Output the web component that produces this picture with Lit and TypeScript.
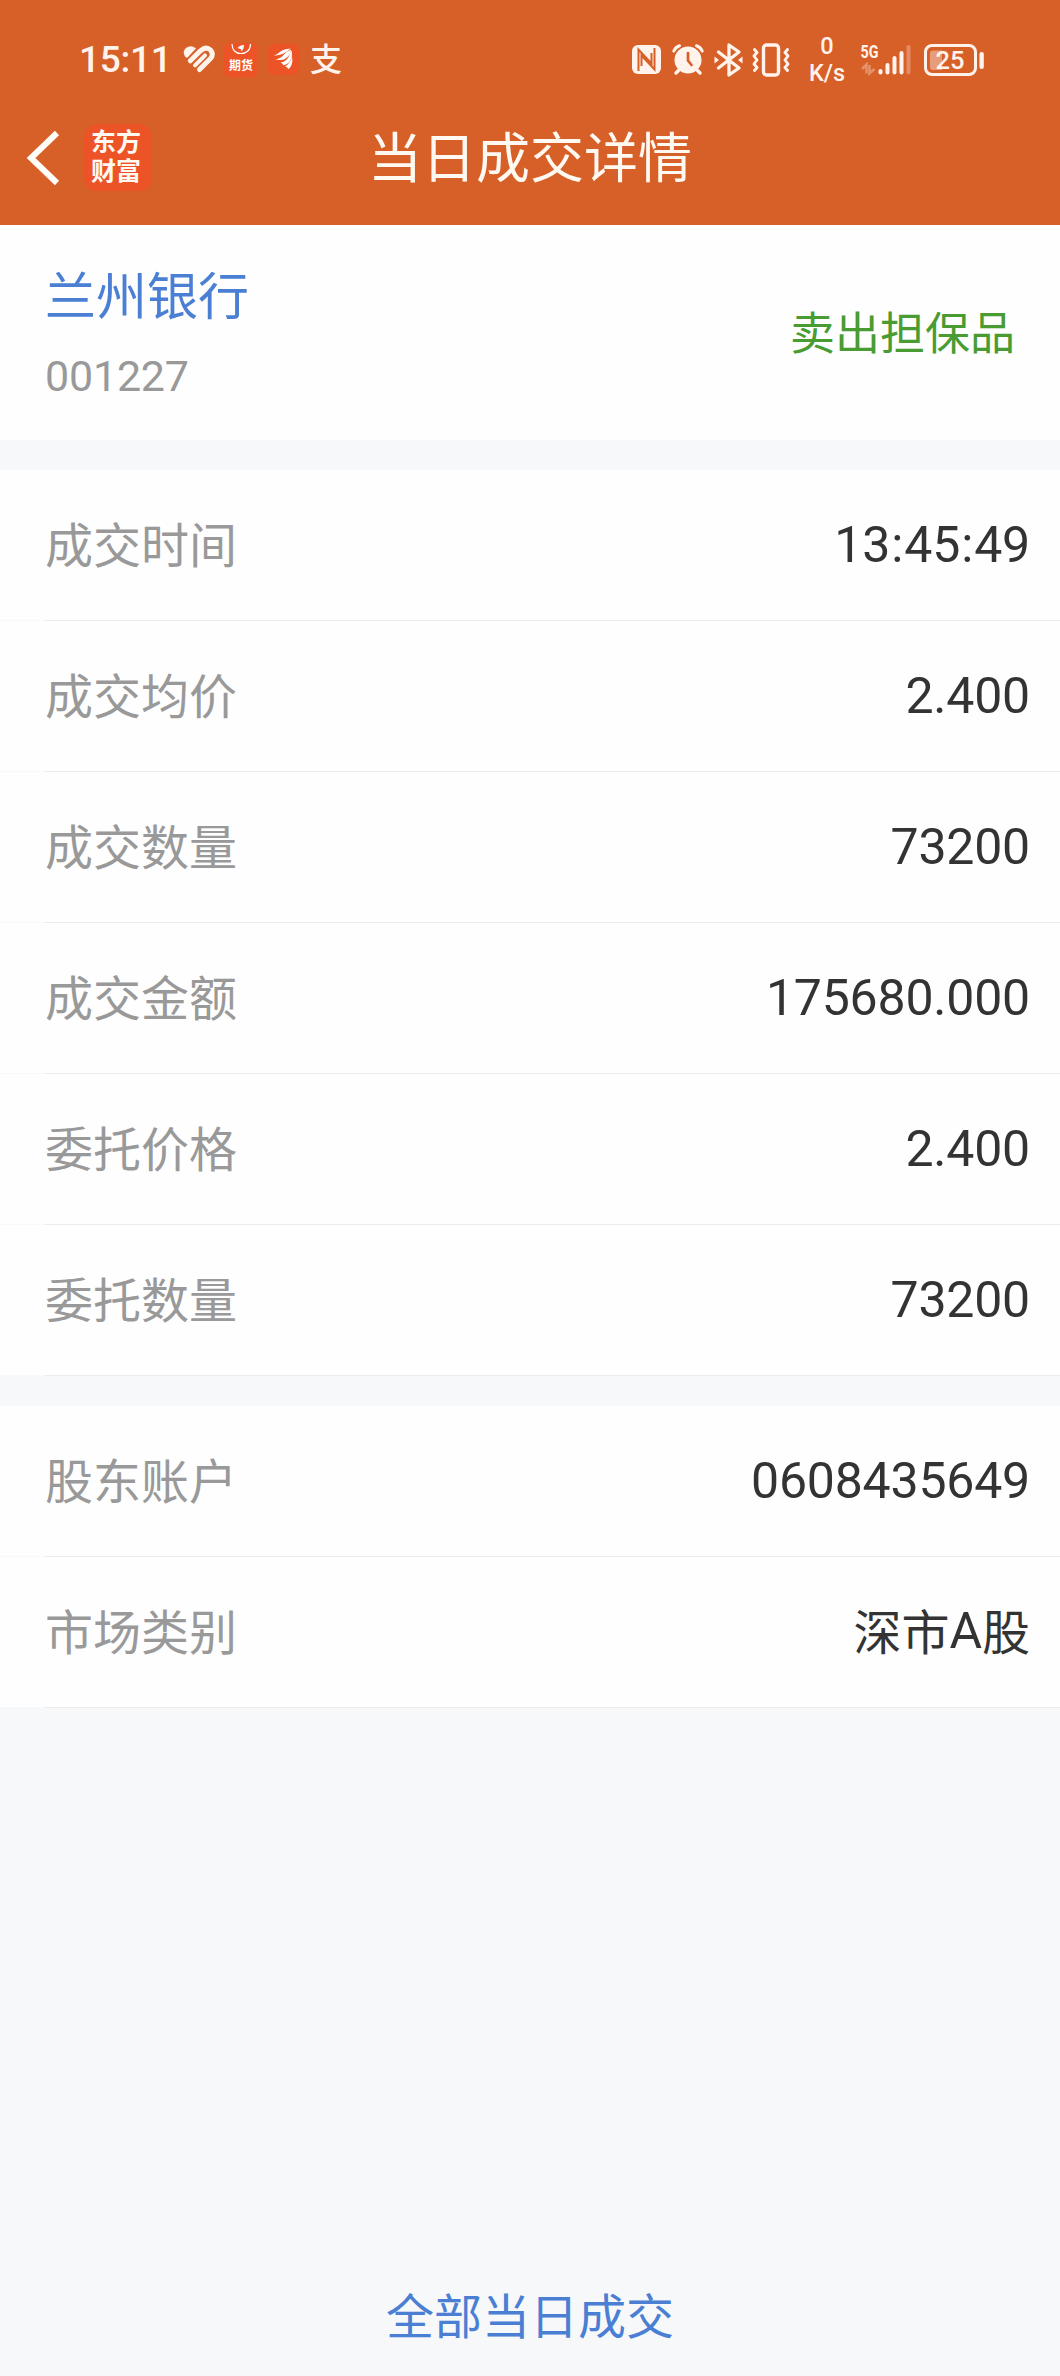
import { LitElement, html, css, svg } from "lit";
import { customElement, property } from "lit/decorators.js";

@customElement("status-bar")
class StatusBar extends LitElement {
  static styles = css`
    :host {
      display: flex;
      align-items: center;
      justify-content: space-between;
      height: 119px;
      padding: 0 76px 0 79px;
      box-sizing: border-box;
      color: #fff3ec;
      font-family: Roboto, "Noto Sans CJK SC", sans-serif;
    }
    .side {
      display: flex;
      align-items: center;
      height: 34px;
    }
    svg {
      display: block;
      flex: none;
      overflow: visible;
    }
    .time {
      width: 104px;
      font-size: 37px;
      line-height: 44px;
      font-weight: 500;
      letter-spacing: -0.3px;
      white-space: nowrap;
    }
    .futures {
      margin-left: 9px;
    }
    .eagle {
      margin-left: 10px;
    }
    .pay {
      width: 34px;
      margin-left: 11px;
      font-size: 32px;
      line-height: 48px;
      font-weight: 500;
    }
    .alarm {
      margin-left: 11px;
    }
    .bluetooth {
      margin-left: 10px;
    }
    .vibrate {
      margin-left: 9px;
    }
    .speed {
      display: flex;
      flex-direction: column;
      align-items: center;
      width: 38px;
      margin-left: 18px;
      font-size: 23.5px;
      line-height: 27px;
      font-weight: 500;
    }
    .signal {
      margin-left: 15px;
    }
    .battery {
      margin-left: 12px;
    }
    text {
      font-family: Roboto, "Noto Sans CJK SC", sans-serif;
    }
  `;

  render() {
    const bars = [
      [17.5, 26, 1],
      [24.5, 20, 1],
      [31.5, 13, 1],
      [38.5, 8, 1],
      [45.5, 2, 0.3],
    ];
    return html`
      <div class="side">
        <div class="time">15:11</div>
        <svg width="32" height="30" viewBox="0 0 32 30" fill="none" stroke="#fff3ec" stroke-linecap="round" stroke-linejoin="round">
          <path d="M2 11.500Q-1 6.500 3 3Q7.500 -.500 12.500 3L13 3.500L4.500 12.500Q3 13 2 11.500Z" fill="#fff3ec" stroke="none" />
          <path d="M7.300 15.800L17.500 5.800Q23 1 27.500 5Q31.500 9.500 27 14L16.500 24.500" stroke-width="5" />
          <path d="M12 20.300L22 10.300" stroke-width="4" />
        </svg>
        <svg class="futures" width="34" height="34" viewBox="0 0 34 34">
          <rect width="34" height="34" rx="6" fill="#ec5427" />
          <path d="M8 1C8 7 11.500 10.500 17 10.500S26.500 7 26.500 1" fill="none" stroke="#fff" stroke-width="1.200" />
          <path d="M13.500 5Q16 2 20 2Q20 6 17.500 8.500Q17.500 6.500 16.500 6Z" fill="#fff" />
          <text x="17" y="26.500" text-anchor="middle" font-size="12" font-weight="700" fill="#fff">期货</text>
        </svg>
        <svg class="eagle" width="31" height="31" viewBox="0 0 31 31">
          <rect width="31" height="31" rx="6" fill="#ec5427" />
          <path d="M6 11.500Q10 10 12.500 7.500Q15.500 5 22.500 4.500Q20 7.500 15.500 9.500Q10 12 6 11.500Z" fill="#fff" />
          <path d="M7.500 15.300Q13 14.500 16 10.500Q18.500 7.500 23 5.500Q22.500 10.500 19 13.500Q14.500 17.500 7.500 15.300Z" fill="#fff" />
          <path d="M12.500 18.800Q19.500 17 21.500 11Q22 8 23.500 6.500Q25 12 22 17Q19 21 15.500 21.200Q15 19.500 12.500 18.800Z" fill="#fff" />
          <path d="M17 22.500Q22.500 19.500 24 12Q25 17 23.500 21Q22.200 24 20.300 25Q19.500 22.800 17 22.500Z" fill="#fff" />
        </svg>
        <div class="pay">支</div>
      </div>
      <div class="side">
        <svg width="29" height="29" viewBox="0 0 29 29">
          <rect width="29" height="29" rx="6" fill="#fff3ec" />
          <path d="M6.500 26V4.500L19.500 18.500V8M22.500 3V24.500L9.500 10.500V21" fill="none" stroke="#d75f28" stroke-width="2" />
        </svg>
        <svg class="alarm" width="32" height="31" viewBox="0 0 32 31" fill="none" stroke="#fff3ec" stroke-linecap="round">
          <circle cx="16" cy="16" r="13.500" fill="#fff3ec" stroke="none" />
          <path d="M1.800 7Q3.500 3 7.500 1.700M30.200 7Q28.500 3 24.500 1.700" stroke-width="3" />
          <path d="M7 26L4 29M25 26L28 29" stroke-width="3.500" />
          <path d="M16 9V16.500L19.500 21" stroke="#d75f28" stroke-width="2.700" />
        </svg>
        <svg class="bluetooth" width="29" height="34" viewBox="0 0 29 34" fill="none" stroke="#fff3ec" stroke-width="3.300" stroke-linejoin="round" stroke-linecap="round">
          <path d="M4.500 9L25 25L15 32V2L25 9L4.500 25" />
          <path d="M.500 13.500L5 17L.500 20.500ZM28.500 13.500L24 17L28.500 20.500Z" fill="#fff3ec" stroke="none" />
        </svg>
        <svg class="vibrate" width="38" height="34" viewBox="0 0 38 34" fill="none" stroke="#fff3ec" stroke-width="3.400" stroke-linejoin="round" stroke-linecap="round">
          <rect x="11.500" y="2" width="15" height="30" rx="3" />
          <path d="M2.500 6.500L5 9.500L2 13L5 17L2 21L5 24.500L2.500 27.500M35.500 6.500L33 9.500L36 13L33 17L36 21L33 24.500L35.500 27.500" stroke-width="2.900" />
        </svg>
        <div class="speed"><span>0</span><span>K/s</span></div>
        <svg class="signal" width="51" height="34" viewBox="0 0 51 34">
          <text x="-.500" y="14.500" font-size="18.500" font-weight="700" fill="#fff3ec" textLength="18" lengthAdjust="spacingAndGlyphs">5G</text>
          <path d="M1 26L5.500 21.500V30.500M8.500 22V30.500L13.500 26" fill="none" stroke="#fff3ec" stroke-opacity=".35" stroke-width="2.500" />
          ${bars.map(
            ([x, y, o]) => svg`<rect x=${x} y=${y} width="4" height=${31.5 - y} rx="2" fill="#fff3ec" fill-opacity=${o} />`
          )}
        </svg>
        <svg class="battery" width="60" height="34" viewBox="0 0 60 34">
          <rect x="1.500" y="2.500" width="50" height="29" rx="6.500" fill="none" stroke="#fff3ec" stroke-width="3" />
          <path d="M9 7.500H18V27H9Q6 27 6 24V10.500Q6 7.500 9 7.500Z" fill="#fff3ec" fill-opacity=".42" />
          <text x="26" y="26" text-anchor="middle" font-size="26.500" font-weight="500" textLength="29" lengthAdjust="spacingAndGlyphs" fill="#fff3ec">25</text>
          <rect x="55.500" y="9" width="4.300" height="17" rx="2" fill="#fff3ec" />
        </svg>
      </div>
    `;
  }
}

@customElement("nav-header")
class NavHeader extends LitElement {
  static styles = css`
    :host {
      display: grid;
      grid-template-columns: 365px 1fr 365px;
      align-items: center;
      height: 106px;
      padding-bottom: 29px;
      box-sizing: border-box;
      color: #fff9f2;
      font-family: Roboto, "Noto Sans CJK SC", sans-serif;
    }
    .left {
      display: flex;
      align-items: center;
      gap: 23px;
      padding-left: 26px;
    }
    .badge {
      display: flex;
      flex-direction: column;
      justify-content: center;
      align-items: center;
      width: 68px;
      height: 67px;
      border-radius: 13px;
      background: #ec5427;
      font-size: 25px;
      line-height: 29px;
      font-weight: 700;
      padding-right: 4px;
      padding-bottom: 1px;
      box-sizing: border-box;
    }
    .title {
      padding-top: 5px;
      font-size: 54px;
      line-height: 72px;
      text-align: center;
      white-space: nowrap;
    }
  `;

  render() {
    return html`
      <div class="left">
        <svg width="35" height="56" viewBox="0 0 35 56" fill="none" stroke="#fffdf8" stroke-width="6">
          <path d="M31 3L5 28L31 53" />
        </svg>
        <div class="badge"><span>东方</span><span>财富</span></div>
      </div>
      <div class="title">当日成交详情</div>
    `;
  }
}

@customElement("detail-row")
class DetailRow extends LitElement {
  static styles = css`
    :host {
      display: flex;
      flex-direction: column;
      height: 151px;
      background: #fefefe;
      font-family: Roboto, "Noto Sans CJK SC", sans-serif;
    }
    .line {
      flex: 1;
      display: flex;
      align-items: center;
      justify-content: space-between;
      padding: 0 30px 0 45px;
      font-size: 48px;
      line-height: 70px;
    }
    .label {
      padding-top: 4px;
      color: #999;
    }
    .value {
      padding-top: 1px;
      color: #333;
    }
    .latin {
      font-size: 50px;
      letter-spacing: -0.2px;
    }
    .han {
      vertical-align: -2px;
    }
    .colon {
      padding: 0 1.1px;
    }
    .rule {
      height: 1px;
      background: linear-gradient(90deg, #f8f9fa 45px, #ebebeb 45px);
    }
  `;

  @property() label = "";
  @property() value = "";

  render() {
    const runs = this.value.match(/:|[\x21-\x39\x3b-\x7e]+|[^\x21-\x7e]+/g) ?? [];
    return html`
      <div class="line">
        <span class="label">${this.label}</span>
        <span class="value"
          >${runs.map((run) =>
            run === ":"
              ? html`<span class="latin colon">:</span>`
              : /^[\x21-\x7e]/.test(run)
                ? html`<span class="latin">${run}</span>`
                : html`<span class="han">${run}</span>`
          )}</span
        >
      </div>
      <div class="rule"></div>
    `;
  }
}

@customElement("app-root")
class AppRoot extends LitElement {
  static styles = css`
    :host {
      display: flex;
      flex-direction: column;
      width: 1060px;
      height: 2376px;
      background: #f7f8fa;
      font-family: Roboto, "Noto Sans CJK SC", sans-serif;
    }
    .top {
      background: #d75f28;
    }
    .stock {
      display: flex;
      justify-content: space-between;
      height: 215px;
      padding: 36px 45px 0;
      box-sizing: border-box;
      background: #fefefe;
    }
    .name {
      color: #4a7fd3;
      font-size: 51px;
      line-height: 74px;
    }
    .code {
      margin-top: 11px;
      color: #999;
      font-size: 43px;
      line-height: 60px;
      letter-spacing: -0.2px;
    }
    .side {
      margin-top: 41px;
      color: #499c32;
      font-size: 45px;
      line-height: 66px;
      height: 66px;
    }
    .group {
      margin-top: 30px;
    }
    .all {
      margin-top: auto;
      padding-bottom: 23px;
      text-align: center;
      color: #4a7fd3;
      font-size: 48px;
      line-height: 70px;
    }
  `;

  private groups = [
    [
      ["成交时间", "13:45:49"],
      ["成交均价", "2.400"],
      ["成交数量", "73200"],
      ["成交金额", "175680.000"],
      ["委托价格", "2.400"],
      ["委托数量", "73200"],
    ],
    [
      ["股东账户", "0608435649"],
      ["市场类别", "深市A股"],
    ],
  ];

  render() {
    return html`
      <div class="top">
        <status-bar></status-bar>
        <nav-header></nav-header>
      </div>
      <div class="stock">
        <div>
          <div class="name">兰州银行</div>
          <div class="code">001227</div>
        </div>
        <div class="side">卖出担保品</div>
      </div>
      ${this.groups.map(
        (rows) => html`<div class="group">
          ${rows.map(([label, value]) => html`<detail-row .label=${label} .value=${value}></detail-row>`)}
        </div>`
      )}
      <div class="all">全部当日成交</div>
    `;
  }
}
